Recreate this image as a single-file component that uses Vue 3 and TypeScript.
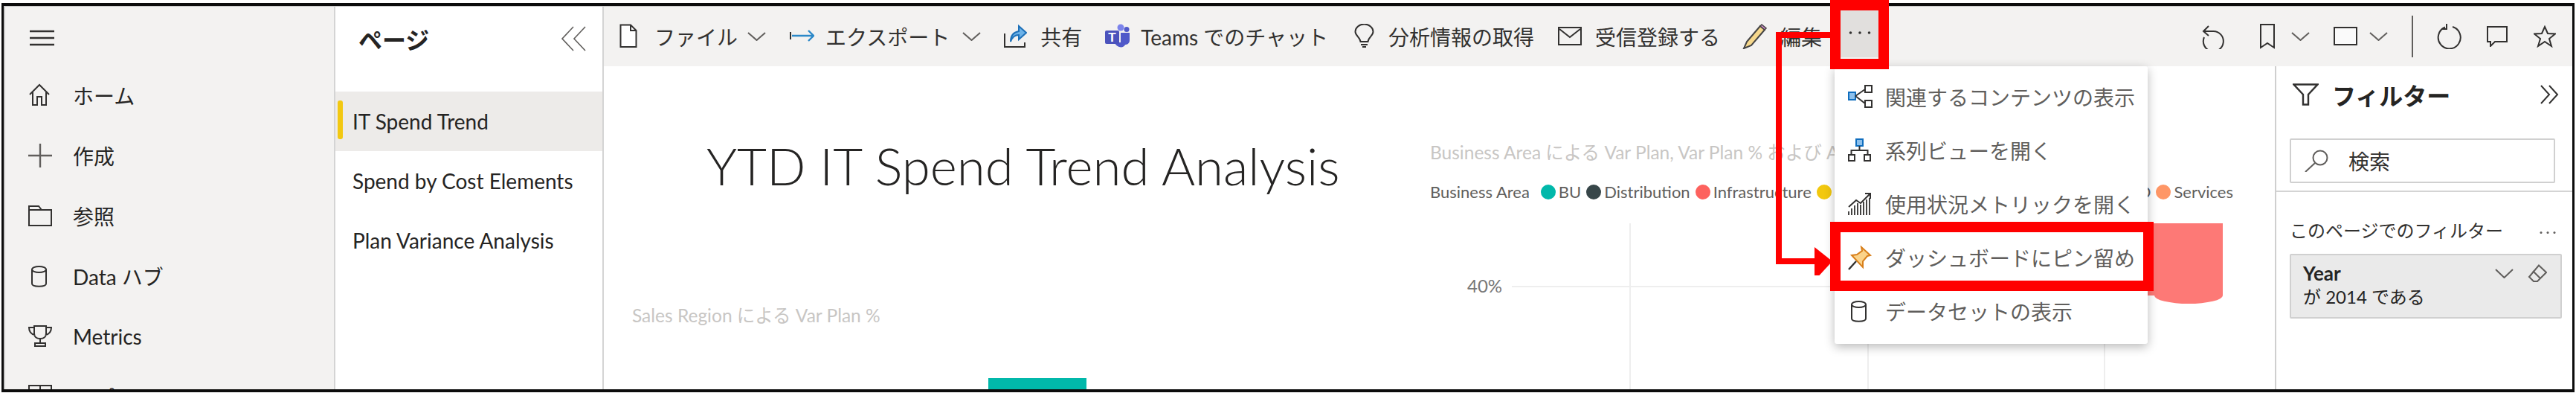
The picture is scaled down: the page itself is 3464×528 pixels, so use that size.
<script setup lang="ts">
interface Row {
  label: string
  icon: string
}

interface Tool extends Row {
  w: number
  gap: number
  ml: number
  caret?: number
}

const stroke = 'fill="none" stroke="#323130" stroke-width="2"'

const icons: Record<string, string> = {
  home: `<path d="M2 15 15 2l13 13M6 12v17h6V18h6v11h6V12" ${stroke}/>`,
  plus: `<path d="M16 0v32M0 16h32" fill="none" stroke="#605e5c" stroke-width="2.4"/>`,
  folder: `<path d="M1 3h13l4 5h13v21H1ZM1 8h17" ${stroke}/>`,
  data: `<path d="M5 7v19c0 5 19 5 19 0V7" ${stroke}/><ellipse cx="14.500" cy="7" rx="9.500" ry="4" ${stroke}/>`,
  trophy: `<path d="M8 2h16v10c0 5-4 7-8 7s-8-2-8-7ZM8 4H1c0 6 3 9 8 10M24 4h7c0 6-3 9-8 10M16 19v5M9 25h14v4H9Z" ${stroke}/>`,
  apps: `<path d="M1 1h30v30H1ZM16 1v30M1 16h30" ${stroke}/>`,
  file: `<path d="M1.500 1.500H15L22.500 9v22h-21Z" fill="#fff" stroke="#323130" stroke-width="2"/><path d="M15 1.500V9h7.500" ${stroke}/>`,
  export: `<path d="M1 11v10" ${stroke}/><path d="M3 16h28M25 9l7 7-7 7" fill="none" stroke="#2b88c8" stroke-width="2.400"/>`,
  share: `<path d="M2 13v18h27v-6" ${stroke}/><path d="M10 24c0-9 5-13 11-14V3l10 9-10 9v-6c-5 0-9 3-11 9Z" fill="#6cb2e8" stroke="#1d70b8" stroke-width="2"/>`,
  teams: `<circle cx="21" cy="5" r="4.500" fill="#7b83eb"/><circle cx="29" cy="7.500" r="3.500" fill="#5059c9"/><path d="M21 12h12v10c0 5-4 6-6 6-1 3-5 4-8 3s-6-4-6-6h8Z" fill="#5059c9"/><rect y="9" width="19" height="18" rx="2" fill="#4b53bc"/><text x="9.500" y="24" text-anchor="middle" font-family="Liberation Sans, sans-serif" font-weight="700" font-size="17" fill="#fff">T</text>`,
  bulb: `<path d="M8.500 24c-.500-6-7-8-7-13.500a12 10 0 0 1 24 0c0 5.500-6.500 7.500-7 13.500ZM9 28h9M11 31h5" ${stroke}/>`,
  mail: `<rect x="1" y="5" width="30" height="23" ${stroke}/><path d="m2 7 14 11L30 7" ${stroke}/>`,
  pencil: `<path d="M7 24 25 3l6 5-18 21-10 4Z" fill="#f6d88c" stroke="#444" stroke-width="2"/><path d="m25 3 2-2 6 5-2 2Z" fill="#d58ad0" stroke="#444" stroke-width="1.500"/>`,
  related: `<rect x="1" y="10" width="9" height="10" fill="#8cc0ec" stroke="#106ebe" stroke-width="2"/><rect x="23" y="1" width="9" height="9" ${stroke}/><rect x="23" y="21" width="9" height="9" ${stroke}/><path d="M10 15 23 6M10 15l13 10" ${stroke}/>`,
  lineage: `<rect x="11" y="1" width="9" height="9" fill="#8cc0ec" stroke="#106ebe" stroke-width="2"/><path d="M15.500 10v6M4.500 22v-6h22v6" ${stroke}/><rect x="1" y="22" width="8" height="8" ${stroke}/><rect x="22" y="22" width="8" height="8" ${stroke}/>`,
  usage: `<path d="M1 31v-5M5 31v-9M9 31V18M13 31V15M17 31V17M21 31V13M25 31V10M29 31V8" fill="none" stroke="#323130" stroke-width="1.800"/><path d="m1 20 10-9 6 4L30 2M23 2h7v7" ${stroke}/>`,
  pin: `<path d="m18 2 12 11-4 1-6 7 0 8L5 13l7-1 7-5Z" fill="#fbd38a" stroke="#d87f1a" stroke-width="2"/><path d="M1 32 11 21" fill="none" stroke="#323130" stroke-width="2.400"/>`
}

const navItems: Row[] = [
  { label: 'ホーム', icon: 'home' },
  { label: '作成', icon: 'plus' },
  { label: '参照', icon: 'folder' },
  { label: 'Data ハブ', icon: 'data' },
  { label: 'Metrics', icon: 'trophy' },
  { label: 'アプリ', icon: 'apps' }
]

const pages = ['IT Spend Trend', 'Spend by Cost Elements', 'Plan Variance Analysis']

const tools: Tool[] = [
  { label: 'ファイル', icon: 'file', w: 24, gap: 23, ml: 21, caret: 13 },
  { label: 'エクスポート', icon: 'export', w: 33, gap: 15, ml: 32, caret: 17 },
  { label: '共有', icon: 'share', w: 32, gap: 18, ml: 30 },
  { label: 'Teams でのチャット', icon: 'teams', w: 33, gap: 15, ml: 31 },
  { label: '分析情報の取得', icon: 'bulb', w: 27, gap: 19, ml: 35 },
  { label: '受信登録する', icon: 'mail', w: 32, gap: 18, ml: 32 },
  { label: '編集', icon: 'pencil', w: 34, gap: 18, ml: 29 }
]

const menuItems: Row[] = [
  { label: '関連するコンテンツの表示', icon: 'related' },
  { label: '系列ビューを開く', icon: 'lineage' },
  { label: '使用状況メトリックを開く', icon: 'usage' },
  { label: 'ダッシュボードにピン留め', icon: 'pin' },
  { label: 'データセットの表示', icon: 'data' }
]

const legend = [
  { label: 'BU', color: '#01b8aa' },
  { label: 'Distribution', color: '#374649' },
  { label: 'Infrastructure', color: '#fd625e' },
  { label: 'Manufacturing', color: '#f2c80f' },
  { label: 'R&D', color: '#8ad4eb' },
  { label: 'Services', color: '#fe9666' }
]
</script>

<template>
  <div class="page">
    <div class="shell">
      <nav class="nav">
        <svg class="nav__burger" width="33" height="22" viewBox="0 0 33 22">
          <path d="M0 2h33M0 11h33M0 20h33" fill="none" stroke="#323130" stroke-width="2.400" />
        </svg>
        <div v-for="item in navItems" :key="item.label" class="nav__item">
          <svg width="32" height="32" viewBox="0 0 32 32" v-html="icons[item.icon]" />
          <span>{{ item.label }}</span>
        </div>
      </nav>

      <aside class="pages">
        <div class="pages__head">
          <h2 class="pages__title">ページ</h2>
          <svg width="34" height="34" viewBox="0 0 34 34">
            <path d="M17 1 2 17l15 16M33 1 18 17l15 16" fill="none" stroke="#605e5c" stroke-width="1.600" />
          </svg>
        </div>
        <div
          v-for="(name, i) in pages"
          :key="name"
          class="pages__row"
          :class="{ 'pages__row--active': i === 0 }"
        >
          {{ name }}
        </div>
      </aside>

      <div class="main">
        <header class="toolbar">
          <div
            v-for="tool in tools"
            :key="tool.label"
            class="tool"
            :style="{ marginLeft: tool.ml + 'px' }"
          >
            <svg
              :width="tool.w"
              height="34"
              :viewBox="`0 0 ${tool.w} 34`"
              :style="{ marginRight: tool.gap + 'px' }"
              v-html="icons[tool.icon]"
            />
            <span>{{ tool.label }}</span>
            <svg
              v-if="tool.caret"
              width="25"
              height="12"
              viewBox="0 0 25 12"
              :style="{ marginLeft: tool.caret + 'px' }"
            >
              <path d="m1 1 11.500 10L24 1" fill="none" stroke="#605e5c" stroke-width="2" />
            </svg>
          </div>
          <button class="more" type="button">
            <svg width="30" height="6" viewBox="0 0 30 6">
              <circle cx="2.500" cy="3" r="1.800" fill="#323130" />
              <circle cx="15" cy="3" r="1.800" fill="#323130" />
              <circle cx="27.500" cy="3" r="1.800" fill="#323130" />
            </svg>
          </button>

          <div class="toolbar__right">
            <svg width="32" height="34" viewBox="0 0 32 34">
              <path d="M3 10h13a13.500 13.500 0 1 1-12 8M10 3l-7 7 7 6" fill="none" stroke="#323130" stroke-width="2" />
            </svg>
            <svg class="ml-47" width="20" height="34" viewBox="0 0 20 34">
              <path d="M1 1h18v31l-9-6-9 6Z" fill="none" stroke="#323130" stroke-width="2" />
            </svg>
            <svg class="ml-22" width="25" height="12" viewBox="0 0 25 12">
              <path d="m1 1 11.500 10L24 1" fill="none" stroke="#605e5c" stroke-width="2" />
            </svg>
            <svg class="ml-32" width="32" height="26" viewBox="0 0 32 26">
              <rect x="1" y="1" width="30" height="23" fill="#fafafa" stroke="#323130" stroke-width="2" />
            </svg>
            <svg class="ml-16" width="25" height="12" viewBox="0 0 25 12">
              <path d="m1 1 11.500 10L24 1" fill="none" stroke="#605e5c" stroke-width="2" />
            </svg>
            <span class="toolbar__divider" />
            <svg class="ml-32" width="33" height="34" viewBox="0 0 33 34">
              <path d="M21 4a15 15 0 1 1-10 .500M13 0v7H6" fill="none" stroke="#323130" stroke-width="2" />
            </svg>
            <svg class="ml-34" width="28" height="28" viewBox="0 0 28 28">
              <path d="M1 1h26v20H11l-6 6v-6H1Z" fill="none" stroke="#323130" stroke-width="2" />
            </svg>
            <svg class="ml-35" width="30" height="30" viewBox="0 0 30 30">
              <path d="m15 2 4 9 10 .500-8 6.500 3 10-9-6-9 6 3-10-8-6.500L11 11Z" fill="none" stroke="#323130" stroke-width="2" />
            </svg>
          </div>
        </header>

        <div class="body">
          <section class="canvas">
            <h1 class="visual report-title">YTD IT Spend Trend Analysis</h1>
            <div class="visual chart-title chart-title--sales">Sales Region による Var Plan %</div>
            <div class="visual bar" />

            <div class="visual chart-title chart-title--area">Business Area による Var Plan, Var Plan % および A</div>
            <div class="visual legend">
              <span class="legend__name">Business Area</span>
              <span v-for="entry in legend" :key="entry.label" class="legend__entry">
                <i class="legend__dot" :style="{ background: entry.color }" />{{ entry.label }}
              </span>
            </div>
            <div class="visual axis">40%</div>
            <svg class="visual grid" width="2248" height="435" viewBox="0 0 2248 435">
              <path d="M1221 296h700M1380 211v224M1700 373v62M2018 373v62" fill="none" stroke="#eeeeee" stroke-width="2" />
              <path d="M2040 211h137v97a46 11 0 0 1-92 0l-45 0Z" fill="#fd7976" />
            </svg>
          </section>

          <aside class="filters">
            <div class="filters__top">
              <div class="filters__head">
                <svg width="35" height="30" viewBox="0 0 35 30">
                  <path d="M1.500 1.500h32L21 15v13.500h-7V15Z" fill="none" stroke="#323130" stroke-width="2.400" />
                </svg>
                <h2 class="filters__title">フィルター</h2>
                <svg class="filters__collapse" width="25" height="26" viewBox="0 0 25 26">
                  <path d="m1 1 11 12L1 25M12 1l11 12-11 12" fill="none" stroke="#323130" stroke-width="2" />
                </svg>
              </div>
              <div class="search">
                <svg width="32" height="30" viewBox="0 0 32 30">
                  <circle cx="21" cy="11" r="9.500" fill="none" stroke="#605e5c" stroke-width="2" />
                  <path d="M14 18 1 30" fill="none" stroke="#605e5c" stroke-width="2" />
                </svg>
                <span>検索</span>
              </div>
            </div>
            <div class="filters__section">
              <div class="filters__label">
                <span>このページでのフィルター</span>
                <svg width="22" height="5" viewBox="0 0 22 5">
                  <circle cx="2" cy="2.500" r="1.500" fill="#605e5c" />
                  <circle cx="11" cy="2.500" r="1.500" fill="#605e5c" />
                  <circle cx="20" cy="2.500" r="1.500" fill="#605e5c" />
                </svg>
              </div>
              <div class="card">
                <div class="card__text">
                  <strong>Year</strong>
                  <span>が 2014 である</span>
                </div>
                <div class="card__actions">
                  <svg width="25" height="13" viewBox="0 0 25 13">
                    <path d="m1 1 11.500 11L24 1" fill="none" stroke="#605e5c" stroke-width="2" />
                  </svg>
                  <svg width="26" height="24" viewBox="0 0 26 24">
                    <path d="M15 1.500 25 11 13 23H8l-6-6ZM7 9l10 10" fill="none" stroke="#605e5c" stroke-width="2" />
                  </svg>
                </div>
              </div>
            </div>
          </aside>
        </div>
      </div>
    </div>

    <div class="menu">
      <div v-for="item in menuItems" :key="item.label" class="menu__item">
        <svg width="33" height="33" viewBox="0 0 33 33" v-html="icons[item.icon]" />
        <span>{{ item.label }}</span>
      </div>
    </div>

    <!-- red callouts drawn over the screenshot -->
    <svg class="connector" width="90" height="330" viewBox="0 0 90 330">
      <path d="M81 7H12v304h52" fill="none" stroke="#ff0000" stroke-width="8" />
      <path d="M60 292l24 19-24 26Z" fill="#ff0000" />
    </svg>
    <div class="callout callout--more" />
    <div class="callout callout--pin" />
  </div>
</template>

<style scoped>
.page {
  position: relative;
  width: 3464px;
  height: 528px;
  padding: 4px 2px 1px;
  box-sizing: border-box;
  overflow: hidden;
  background: #fff;
  color: #252423;
  font-family: Lato, "Noto Sans CJK JP", sans-serif;
  font-size: 28px;
}

.shell {
  display: flex;
  height: 100%;
  box-sizing: border-box;
  padding: 1px 0 0 2px;
  border: solid #0c0c0c;
  border-width: 4px 3px;
  background: #c9c9c9;
  overflow: hidden;
}

.nav {
  flex: 0 0 442px;
  box-sizing: border-box;
  padding: 31px 0 0 33px;
  background: #f3f2f1;
}

.nav__burger {
  display: block;
  margin-bottom: 25px;
}

.nav__item {
  display: flex;
  align-items: center;
  gap: 28px;
  height: 81px;
  margin-left: -2px;
}

.pages {
  flex: 0 0 363px;
  box-sizing: border-box;
  border: solid #d4d4d4;
  border-width: 0 2px;
  background: #fff;
}

.pages__head {
  display: flex;
  align-items: center;
  justify-content: space-between;
  height: 86px;
  margin-bottom: 28px;
  padding: 0 22px 0 31px;
}

.pages__title {
  margin: 0;
  font-size: 32px;
  font-weight: 700;
}

.pages__row {
  position: relative;
  display: flex;
  align-items: center;
  height: 80px;
  padding-left: 23px;
}

.pages__row--active {
  background: #edebe9;
}

.pages__row--active::before {
  content: "";
  position: absolute;
  left: 3px;
  top: 12px;
  bottom: 16px;
  width: 7px;
  border-radius: 3px;
  background: #f2c811;
}

.main {
  flex: 1;
  min-width: 0;
  display: flex;
  flex-direction: column;
  background: #fff;
}

.toolbar {
  flex: 0 0 80px;
  display: flex;
  align-items: center;
  background: #f3f2f1;
  color: #323130;
}

.tool {
  display: flex;
  align-items: center;
  white-space: nowrap;
}

.more {
  display: grid;
  place-items: center;
  width: 55px;
  height: 65px;
  margin: -10px 0 0 23px;
  padding: 0;
  border: 0;
  background: #e1dfdd;
}

.toolbar__right {
  display: flex;
  align-items: center;
  margin-left: 432px;
}

.toolbar__divider {
  width: 2px;
  height: 56px;
  margin-left: 32px;
  background: #605e5c;
}

.ml-16 { margin-left: 16px; }
.ml-22 { margin-left: 22px; }
.ml-32 { margin-left: 32px; }
.ml-34 { margin-left: 34px; }
.ml-35 { margin-left: 35px; }
.ml-47 { margin-left: 47px; }

.body {
  flex: 1;
  min-height: 0;
  display: flex;
}

.canvas {
  position: relative;
  flex: 1;
  min-width: 0;
  overflow: hidden;
}

.visual {
  position: absolute;
  white-space: nowrap;
}

.report-title {
  left: 138px;
  top: 89px;
  margin: 0;
  font-size: 69px;
  font-weight: 300;
  line-height: 90px;
}

.chart-title {
  color: #c8c6c4;
  font-size: 24.500px;
  line-height: 32px;
}

.chart-title--sales {
  left: 38px;
  top: 319px;
}

.chart-title--area {
  left: 1111px;
  top: 100px;
}

.bar {
  left: 517px;
  top: 419px;
  width: 132px;
  height: 20px;
  background: #01b8aa;
}

.legend {
  left: 1111px;
  top: 153px;
  display: flex;
  gap: 7px;
  width: 1080px;
  color: #605e5c;
  font-size: 22px;
  line-height: 32px;
}

.legend__name {
  margin-right: 8px;
}

.legend__entry {
  display: flex;
  align-items: center;
  gap: 4px;
}

/* R&D and Services sit at the far end, the rest of the row is under the menu */
.legend__entry:nth-last-child(2) {
  margin-left: auto;
}

.legend__dot {
  width: 20px;
  height: 20px;
  border-radius: 50%;
}

.axis {
  left: 1161px;
  top: 280px;
  color: #777;
  font-size: 24px;
  line-height: 30px;
}

.grid {
  left: 0;
  top: 0;
}

.filters {
  flex: 0 0 400px;
  box-sizing: border-box;
  border-left: 2px solid #cfcfcf;
  background: #fff;
}

.filters__top {
  padding: 0 23px 10px 18px;
  border-bottom: 2px solid #d4d4d4;
}

.filters__head {
  display: flex;
  align-items: center;
  height: 76px;
  padding-left: 4px;
  gap: 18px;
}

.filters__title {
  margin: 0;
  font-size: 32px;
  font-weight: 700;
}

.filters__collapse {
  margin-left: auto;
  margin-right: -5px;
}

.search {
  display: flex;
  align-items: center;
  gap: 27px;
  box-sizing: border-box;
  height: 60px;
  margin-top: 21px;
  padding-left: 18px;
  border: 2px solid #d0d0d0;
  border-radius: 2px;
  color: #323130;
}

.filters__section {
  padding: 30px 14px 0 18px;
}

.filters__label {
  display: flex;
  align-items: center;
  justify-content: space-between;
  height: 40px;
  padding-right: 8px;
  color: #323130;
  font-size: 24px;
}

.filters__label svg {
  margin-top: 8px;
}

.card {
  display: flex;
  justify-content: space-between;
  box-sizing: border-box;
  height: 87px;
  margin-top: 13px;
  padding: 8px 18px 0 16px;
  border: 2px solid #d0d0d0;
  border-radius: 2px;
  background: #eaeaea;
  font-size: 24px;
}

.card__text {
  display: flex;
  flex-direction: column;
  line-height: 32px;
}

.card__text strong {
  font-size: 26px;
}

.card__actions {
  display: flex;
  align-items: center;
  gap: 19px;
  height: 32px;
}

.menu {
  position: absolute;
  left: 2467px;
  top: 89px;
  width: 421px;
  height: 373px;
  box-sizing: border-box;
  padding-top: 5px;
  border-radius: 3px;
  background: #fff;
  box-shadow: 0 4px 14px rgba(0, 0, 0, 0.28);
}

.menu__item {
  display: flex;
  align-items: center;
  gap: 17px;
  height: 72px;
  padding-left: 18px;
  color: #605e5c;
  white-space: nowrap;
}

.connector {
  position: absolute;
  left: 2380px;
  top: 40px;
}

.callout {
  position: absolute;
  box-sizing: border-box;
  border: 14px solid #ff0000;
}

.callout--more {
  left: 2461px;
  top: 0;
  width: 79px;
  height: 93px;
}

.callout--pin {
  left: 2461px;
  top: 298px;
  width: 435px;
  height: 93px;
}
</style>
